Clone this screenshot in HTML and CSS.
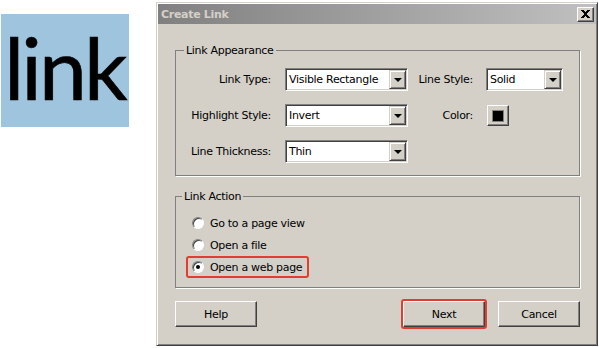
FILE: index.html
```html
<!DOCTYPE html>
<html lang="en">
<head>
<meta charset="UTF-8" />
<title>Create Link</title>
<link rel="stylesheet" href="styles.css">
</head>
<body>

<div class="page">
  <div class="word">link</div>

  <div class="dialog">
    <div class="titlebar">
      <span class="title">Create Link</span>
      <span class="close">
        <svg width="9" height="8" viewBox="0 0 9 8" fill="#000">
          <rect x="0" y="0" width="3" height="1"/><rect x="6" y="0" width="3" height="1"/>
          <rect x="1" y="1" width="3" height="1"/><rect x="5" y="1" width="3" height="1"/>
          <rect x="2" y="2" width="5" height="1"/>
          <rect x="3" y="3" width="3" height="2"/>
          <rect x="2" y="5" width="5" height="1"/>
          <rect x="1" y="6" width="3" height="1"/><rect x="5" y="6" width="3" height="1"/>
          <rect x="0" y="7" width="3" height="1"/><rect x="6" y="7" width="3" height="1"/>
        </svg>
      </span>
    </div>

    <div class="body">
      <fieldset class="group">
        <legend>Link Appearance</legend>
        <div class="grid">
          <span class="lbl">Link Type:</span>
          <div class="combo"><span>Visible Rectangle</span><i class="drop"></i></div>
          <span class="lbl r">Line Style:</span>
          <div class="combo"><span>Solid</span><i class="drop"></i></div>

          <span class="lbl">Highlight Style:</span>
          <div class="combo"><span>Invert</span><i class="drop"></i></div>
          <span class="lbl r">Color:</span>
          <div class="swatch"><i></i></div>

          <span class="lbl">Line Thickness:</span>
          <div class="combo"><span>Thin</span><i class="drop"></i></div>
          <span></span>
          <span></span>
        </div>
      </fieldset>

      <fieldset class="group action">
        <legend>Link Action</legend>
        <div class="radio"><span class="circle"></span>Go to a page view</div>
        <div class="radio"><span class="circle"></span>Open a file</div>
        <div class="radio marked"><span class="circle on"></span>Open a web page</div>
      </fieldset>

      <div class="buttons">
        <button class="btn help">Help</button>
        <button class="btn marked">Next</button>
        <button class="btn">Cancel</button>
      </div>
    </div>
  </div>
</div>

</body>
</html>
```

FILE: styles.css
```css
body { margin: 0; background: #fff; font-family: "DejaVu Sans", sans-serif; font-size: 11px; letter-spacing: -0.3px; color: #000; }
.page { display: flex; align-items: flex-start; }

.word {
  margin: 14px 0 0 1px; width: 128px; height: 113px; box-sizing: border-box;
  padding: 1px 0 0 3px; background: #9fc4dd;
  font-family: Lato, sans-serif; font-size: 86px; line-height: 103px; letter-spacing: -3px;
  -webkit-text-stroke: 0.6px #000;
}

.dialog {
  margin: 2px 0 0 27px; width: 442px; box-sizing: border-box; padding: 1px;
  background: #d4d0c8; border: 1px solid; border-color: #d4d0c8 #404040 #404040 #d4d0c8;
  box-shadow: inset 1px 1px 0 #fff, inset -1px -1px 0 #808080;
}
.titlebar {
  height: 20px; display: flex; align-items: center; justify-content: space-between;
  padding: 0 2px 0 3px; background: linear-gradient(to right, #808080, #c0c0c0);
}
.title { color: #d4d0c8; font-weight: bold; }
.close {
  width: 17px; height: 15px; box-sizing: border-box; display: flex; align-items: center; justify-content: center;
  background: #d4d0c8; border: 1px solid; border-color: #fff #404040 #404040 #fff;
  box-shadow: inset -1px -1px 0 #808080;
}
.close svg { display: block; shape-rendering: crispEdges; }

.body { padding: 20px 16px 17px 17px; }

.group {
  margin: 0; padding: 11px 0 12px; min-inline-size: 0;
  border: 1px solid #808080; box-shadow: 1px 1px 0 #fff;
}
.group legend { padding: 0 2px; margin-left: 8px; line-height: 13px; }
.action { margin-top: 14px; padding: 9px 0 9px; }
.action legend { margin-left: 6px; }

.grid { display: grid; grid-template-columns: 109px 123px 78px 77px; row-gap: 13px; align-items: center; }
.lbl { text-align: right; padding-right: 14px; }
.lbl.r { padding-right: 13px; }

.combo {
  height: 23px; box-sizing: border-box; padding: 1px; display: flex; align-items: center;
  background: #fff; border: 1px solid; border-color: #808080 #fff #fff #808080;
  box-shadow: inset 1px 1px 0 #404040, inset -1px -1px 0 #d4d0c8;
}
.combo span { padding-left: 2px; }
.drop {
  margin-left: auto; width: 17px; height: 19px; box-sizing: border-box;
  display: flex; align-items: center; justify-content: center;
  background: #d4d0c8; border: 1px solid; border-color: #d4d0c8 #404040 #404040 #d4d0c8;
  box-shadow: inset 1px 1px 0 #fff, inset -1px -1px 0 #808080;
}
.drop::after {
  content: ""; width: 0; height: 0; margin-top: 1px;
  border-top: 4px solid #000; border-left: 4px solid transparent; border-right: 4px solid transparent;
}

.swatch {
  margin-left: 1px; width: 22px; height: 21px; box-sizing: border-box;
  display: flex; align-items: center; justify-content: center;
  background: #d4d0c8; border: 1px solid; border-color: #fff #404040 #404040 #fff;
  box-shadow: inset -1px -1px 0 #808080;
}
.swatch i { width: 12px; height: 12px; background: #000; border: 1px solid #808080; box-sizing: border-box; }

.radio {
  width: fit-content; height: 22px; box-sizing: border-box; margin-left: 10px;
  display: flex; align-items: center; gap: 6px; padding: 0 5px 0 4px;
  border: 2px solid transparent; border-radius: 3px;
}
.radio.marked { border-color: #e23d31; }
.circle {
  width: 12px; height: 12px; box-sizing: border-box; border-radius: 50%;
  display: flex; align-items: center; justify-content: center;
  background: #fff; border: 1px solid; border-color: #808080 #fff #fff #808080;
  box-shadow: inset 1px 1px 0 #404040;
}
.circle.on::after { content: ""; width: 4px; height: 4px; border-radius: 50%; background: #000; }

.buttons { display: flex; gap: 13px; margin-top: 13px; }
.btn {
  width: 82px; height: 26px; box-sizing: border-box; padding: 0;
  font: inherit; letter-spacing: inherit; color: #000;
  background: #d4d0c8; border: 1px solid; border-color: #fff #404040 #404040 #fff;
  box-shadow: inset -1px -1px 0 #808080;
}
.btn.help { margin-right: auto; }
.btn.marked { outline: 2px solid #e23d31; border-radius: 1px; }
```
